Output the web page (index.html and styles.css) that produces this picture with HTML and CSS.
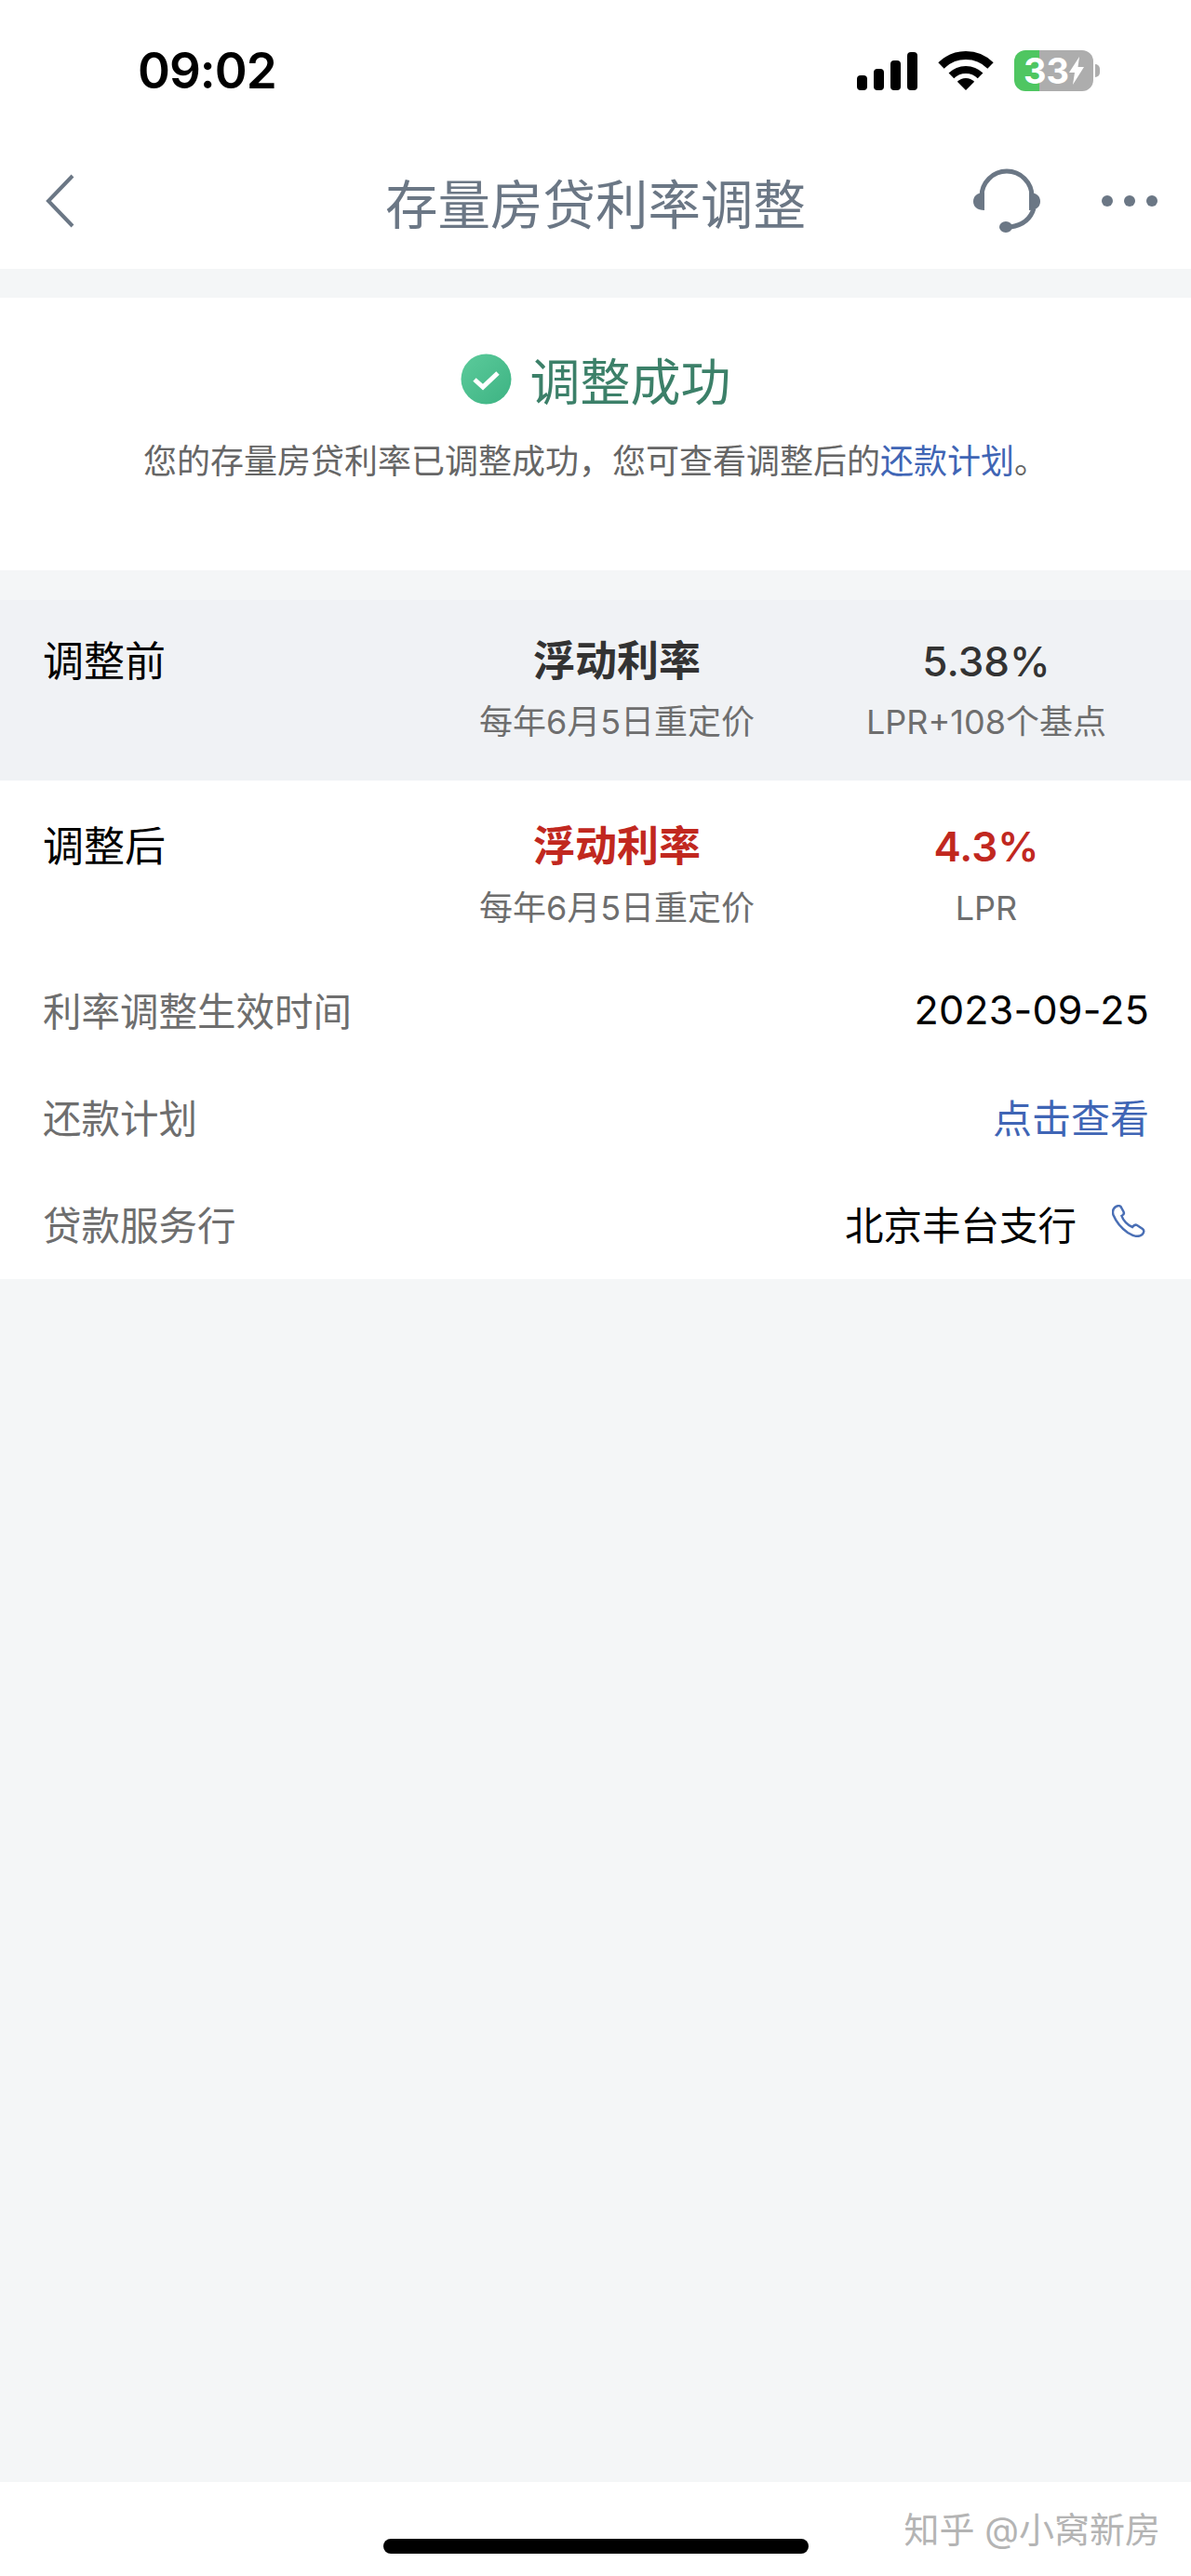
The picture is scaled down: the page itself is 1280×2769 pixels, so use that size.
FILE: index.html
```html
<!DOCTYPE html>
<html lang="zh-CN">
<head>
  <meta charset="UTF-8">
  <meta name="viewport" content="width=device-width, initial-scale=1.0">
  <title>存量房贷利率调整</title>
  <link rel="stylesheet" href="styles.css">
</head>
<body>
  <div class="status-bar">
    <span class="time">09:02</span>
    <div class="status-icons">
      <svg class="signal" width="65" height="41" viewBox="0 0 65 41">
        <rect x="0" y="25" width="11" height="16" rx="4"/>
        <rect x="18" y="18" width="11" height="23" rx="4"/>
        <rect x="36" y="9" width="11" height="32" rx="4"/>
        <rect x="54" y="0" width="11" height="41" rx="4"/>
      </svg>
      <svg class="wifi" width="60" height="42" viewBox="0 0 60 42">
        <path class="wifi-band" stroke-width="9" d="M3.5 15.5A37.5 37.5 0 0 1 56.5 15.5"/>
        <path class="wifi-band" stroke-width="8" d="M14.4 26.4A22 22 0 0 1 45.6 26.4"/>
        <path d="M30 42L20.8 32.8A13 13 0 0 1 39.2 32.8Z"/>
      </svg>
      <div class="battery">
        <div class="battery-body">
          <span>33</span>
          <svg width="16" height="30" viewBox="0 0 16 30"><path d="M11 0L0 17H6L4 30L16 11H9.5Z"/></svg>
        </div>
        <div class="battery-nub"></div>
      </div>
    </div>
  </div>

  <header class="nav">
    <svg class="nav-back" width="32" height="58" viewBox="0 0 32 58">
      <path d="M29 2L3 29L29 56"/>
    </svg>
    <h1>存量房贷利率调整</h1>
    <div class="nav-actions">
      <svg width="72" height="70" viewBox="0 0 72 70">
        <path class="headset-line" d="M9 30A27 27 0 0 1 63 30"/>
        <path class="headset-line" d="M65 43Q60 60 40 63"/>
        <path d="M12 26V45C4 45 0 41 0 35.500C0 30 4 26 12 26Z"/>
        <path d="M60 26V45C68 45 72 41 72 35.500C72 30 68 26 60 26Z"/>
        <ellipse cx="35" cy="63" rx="7" ry="6"/>
      </svg>
      <div class="dots"><i></i><i></i><i></i></div>
    </div>
  </header>

  <main>
    <section class="result">
      <div class="result-title">
        <svg width="55" height="55" viewBox="0 0 55 55">
          <defs>
            <linearGradient id="checkFill" x1="0" y1="0" x2="1" y2="1">
              <stop offset="0" stop-color="#5ccb9b"/>
              <stop offset="1" stop-color="#3db383"/>
            </linearGradient>
          </defs>
          <circle cx="27.500" cy="27.500" r="27" fill="url(#checkFill)"/>
          <path d="M15 28L24 36L40 21" fill="none" stroke="#fff" stroke-width="5"/>
        </svg>
        <span>调整成功</span>
      </div>
      <p>您的存量房贷利率已调整成功&#65292;您可查看调整后的<a href="#">还款计划</a>。</p>
    </section>

    <section class="rate-row before">
      <div class="rate-name">调整前</div>
      <div class="rate-col">
        <div class="rate-main">浮动利率</div>
        <div class="rate-sub">每年6月5日重定价</div>
      </div>
      <div class="rate-col">
        <div class="rate-main num">5.38%</div>
        <div class="rate-sub">LPR+108个基点</div>
      </div>
    </section>

    <section class="details">
      <div class="rate-row after">
        <div class="rate-name">调整后</div>
        <div class="rate-col">
          <div class="rate-main red">浮动利率</div>
          <div class="rate-sub">每年6月5日重定价</div>
        </div>
        <div class="rate-col">
          <div class="rate-main num red">4.3%</div>
          <div class="rate-sub">LPR</div>
        </div>
      </div>
      <div class="info-row">
        <span class="info-label">利率调整生效时间</span>
        <span class="info-date">2023-09-25</span>
      </div>
      <div class="info-row">
        <span class="info-label">还款计划</span>
        <a href="#">点击查看</a>
      </div>
      <div class="info-row">
        <span class="info-label">贷款服务行</span>
        <div class="branch">
          <span>北京丰台支行</span>
          <svg width="36" height="35" viewBox="0 0 36 35">
            <path d="M3 3C5 1 8 .5 9.500 2L12.500 7.500C13.500 9.500 12.500 11 10.500 12C12 17 17 22 22 24C23.500 22 25 21 27 22L33 26C35 27.500 34.500 30 32.500 32C29 35 24 34.500 17 30C10 25 4 17 1.500 11C.5 8 1 5 3 3Z"/>
          </svg>
        </div>
      </div>
    </section>
  </main>

  <footer>
    <div class="home-bar"></div>
    <span class="watermark">知乎 @小窝新房</span>
  </footer>
</body>
</html>
```

FILE: styles.css
```css
body {
  margin: 0;
  height: 2769px;
  display: flex;
  flex-direction: column;
  background-color: #f4f6f7;
  color: #000;
  font-family: Inter, "Noto Sans CJK SC", sans-serif;
}

a {
  color: #3f65b5;
  text-decoration: none;
}

/* Status bar */
.status-bar {
  height: 152px;
  box-sizing: border-box;
  padding: 0 98px 0 148px;
  display: flex;
  justify-content: space-between;
  align-items: center;
  background-color: #fff;
}

.time {
  font-size: 53px;
  font-weight: 600;
  letter-spacing: -1px;
}

.status-icons {
  display: flex;
  align-items: center;
  gap: 22px;
}

.wifi-band {
  fill: none;
  stroke: #000;
}

.battery {
  display: flex;
  align-items: center;
  gap: 2px;
}

.battery-body {
  width: 85px;
  height: 44px;
  border-radius: 12px;
  display: flex;
  justify-content: center;
  align-items: center;
  background: linear-gradient(to right, #4fc661 27px, #adadad 27px);
  color: #fff;
  font-size: 38px;
  font-weight: 700;
  line-height: 44px;
}

.battery-body svg {
  fill: #fff;
}

.battery-nub {
  width: 5px;
  height: 14px;
  border-radius: 0 5px 5px 0;
  background-color: #adadad;
}

/* Navigation */
.nav {
  height: 137px;
  box-sizing: border-box;
  padding: 0 36px 9px 49px;
  display: flex;
  justify-content: space-between;
  align-items: center;
  background-color: #fff;
  position: relative;
}

.nav-back path {
  fill: none;
  stroke: #6b7785;
  stroke-width: 4;
}

.nav h1 {
  position: absolute;
  left: 0;
  right: 0;
  margin: 0;
  text-align: center;
  font-size: 56.500px;
  font-weight: 400;
  color: #6b7785;
}

.nav-actions {
  display: flex;
  align-items: center;
  gap: 66px;
  fill: #6b7785;
}

.headset-line {
  fill: none;
  stroke: #6b7785;
  stroke-width: 5;
}

.dots {
  display: flex;
  gap: 12px;
}

.dots i {
  width: 12px;
  height: 12px;
  border-radius: 50%;
  background-color: #6b7785;
}

/* Content */
main {
  flex: 1;
  padding-top: 31px;
}

.result {
  height: 293px;
  box-sizing: border-box;
  padding-top: 52px;
  margin-bottom: 32px;
  background-color: #fff;
}

.result-title {
  display: flex;
  justify-content: center;
  align-items: center;
  gap: 20px;
  height: 70px;
  font-size: 54px;
  color: #3c8069;
}

.result p {
  margin: 29px 0 0;
  text-align: center;
  font-size: 36px;
  line-height: 50px;
  color: #666;
}

.rate-row {
  display: grid;
  grid-template-columns: 380px 320px 320px;
  column-gap: 77px;
  padding: 38px 46px;
}

.rate-row.before {
  background-color: #f0f2f5;
}

.rate-row.after {
  padding: 43px 46px 26px;
}

.rate-name {
  font-size: 44px;
  line-height: 56px;
}

.rate-col {
  text-align: center;
}

.rate-main {
  font-size: 45px;
  font-weight: 700;
  line-height: 56px;
  color: #333;
}

.rate-main.num {
  font-size: 44px;
  font-weight: 500;
}

.rate-main.red {
  color: #c1281f;
  font-weight: 700;
}

.rate-main.num.red {
  font-weight: 600;
}

.rate-sub {
  margin-top: 12px;
  font-size: 36px;
  line-height: 50px;
  color: #6e6e6e;
}

.after .rate-sub {
  margin-top: 13px;
}

.details {
  padding-bottom: 3px;
  background-color: #fff;
}

.info-row {
  height: 115px;
  padding: 0 45px 0 46px;
  display: flex;
  justify-content: space-between;
  align-items: center;
  font-size: 42px;
}

.info-label {
  font-size: 41.500px;
  color: #6e6e6e;
}

.info-date {
  font-size: 43px;
  letter-spacing: .2px;
}

.branch {
  display: flex;
  align-items: center;
  gap: 38px;
  font-size: 41.500px;
}

.branch svg {
  margin: 0 4px 4px 0;
  fill: none;
  stroke: #4a6fb5;
  stroke-width: 2.500;
}

/* Bottom */
footer {
  height: 101px;
  position: relative;
  display: flex;
  justify-content: center;
  background-color: #fff;
}

.home-bar {
  width: 457px;
  height: 16px;
  margin-top: 61px;
  border-radius: 8px;
  background-color: #000;
}

.watermark {
  position: absolute;
  right: 33px;
  top: 26px;
  font-size: 38px;
  line-height: 50px;
  color: #b4b4b4;
}
```
